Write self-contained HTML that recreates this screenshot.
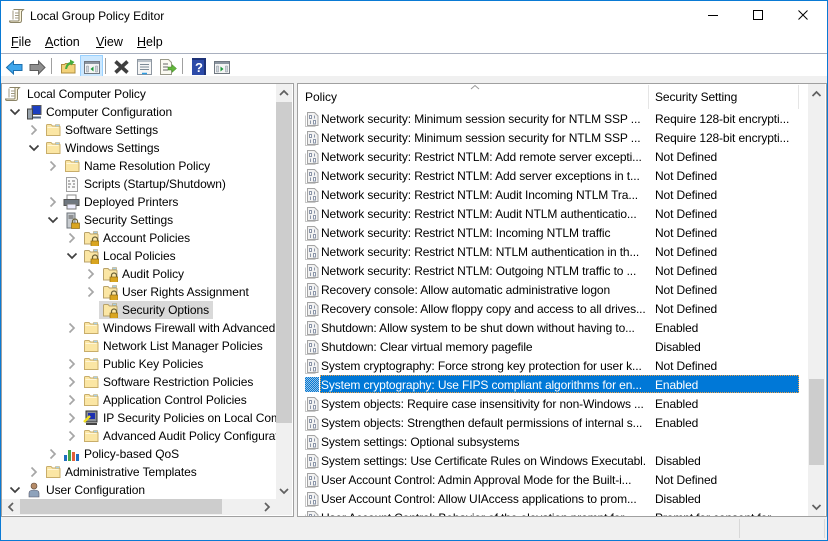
<!DOCTYPE html>
<html><head><meta charset="utf-8"><title>Local Group Policy Editor</title>
<style>
html,body{margin:0;padding:0;width:828px;height:541px;overflow:hidden;background:#fff}
body{position:relative;font:12px/18px "Liberation Sans",sans-serif;color:#000}
div,span,svg{position:absolute;white-space:nowrap}
svg{overflow:visible}
u{text-decoration:underline}
.m{top:34px;font-size:12.5px;line-height:16px}
.tree{left:2px;top:84px;width:274px;height:415px;overflow:hidden;background:#fff}
.tree div{height:18px;font-size:12px;letter-spacing:-.06px;line-height:18px}
.tree svg{width:16px;height:16px}
.list{left:298px;top:109px;width:510px;height:407px;overflow:hidden;background:#fff}
.r{left:23px;width:325px;height:19px;line-height:21px;font-size:12px;letter-spacing:-.12px;overflow:hidden}
.s{left:357px;width:140px;height:19px;line-height:21px;font-size:12px;letter-spacing:-.12px;overflow:hidden}
.i{left:7px;width:14px;height:15px;margin-top:1px}
.sep{top:58px;width:1px;height:16px;background:#a0a0a0}
</style></head><body>
<svg width="0" height="0" style="left:0;top:0">
<defs>
<pattern id="dith" width="2" height="2" patternUnits="userSpaceOnUse"><rect width="2" height="2" fill="#0078d7"/><rect width="1" height="1" fill="#9cc4e4"/><rect x="1" y="1" width="1" height="1" fill="#9cc4e4"/></pattern>
<symbol id="folder" viewBox="0 0 16 16"><path d="M1.5 13.5V3.5q0-1 1-1h3.5l1.500 1.500h6.500q1 0 1 1v8.500z" fill="#fbe6a4" stroke="#c8ad6a"/><path d="M10.500 2.500h4v2h-4z" fill="#a8cfe8" stroke="#c8ad6a" stroke-width=".6"/><path d="M2.500 5.500h11" stroke="#fff6d8"/></symbol>
<symbol id="lock" viewBox="0 0 16 16"><path d="M1.500 14V3.500q0-1 1-1h3.500l1.500 1.500h6.500q1 0 1 1V14z" fill="#fbe6a4" stroke="#b8a26a"/><path d="M10.500 1.500h4v2h-4z" fill="#a8cfe8" stroke="#b8a26a" stroke-width=".6"/><path d="M9.500 11V9.500a2.500 2.500 0 0 1 5 0V11" fill="none" stroke="#6b6238" stroke-width="1.200"/><rect x="8" y="11" width="8" height="6" fill="#d9a520" stroke="#8a6a14" stroke-width=".7"/></symbol>
<symbol id="scroll" viewBox="0 0 16 16"><path d="M4.500 1.500h10l-2 2v9q0 2-2 2H2q-1.500 0-1.500-1.500h8.500q1 0 1-1V2" fill="#fcf5dc" stroke="#8b8467"/><path d="M4 2.500v9M6 5h4M6 7.500h4M6 10h4" stroke="#a09a80" fill="none"/></symbol>
<symbol id="pol" viewBox="0 0 14 15"><path d="M.5 3.500v11h10" fill="none" stroke="#c8c8c8"/><path d="M2.500 .5h7l3.500 3.500v9.500H2.500z" fill="#f2f2f2" stroke="#a4a4a4"/><path d="M4.500 3.500h2v3h-2zM9.500 3.500v3M5.500 8.500v3.500M8.500 8.500h2v3.500h-2z" fill="#fff" stroke="#8b95a8"/></symbol>
<symbol id="cd" viewBox="0 0 16 16"><path d="M3.500 5.500L8 10l4.500-4.500" fill="none" stroke="#404040" stroke-width="1.700"/></symbol>
<symbol id="cr" viewBox="0 0 16 16"><path d="M5.500 3.500L10 8l-4.500 4.500" fill="none" stroke="#a6a6a6" stroke-width="1.700"/></symbol>
</defs></svg>

<!-- window frame -->
<div style="left:0;top:0;width:826px;height:539px;border:1px solid #0a7ad4"></div>
<svg style="left:9px;top:8px" width="16" height="16"><use href="#scroll"/></svg>
<div style="left:30px;top:8px;font-size:12px;letter-spacing:-.05px;line-height:16px">Local Group Policy Editor</div>
<svg style="left:705px;top:8px" width="110" height="14" fill="none" stroke="#000"><path d="M3 7.500h10"/><rect x="48.500" y="2.500" width="9" height="9"/><path d="M93.500 2.500l9 9M102.500 2.500l-9 9"/></svg>

<div class="m" style="left:11px"><u>F</u>ile</div>
<div class="m" style="left:45px"><u>A</u>ction</div>
<div class="m" style="left:96px"><u>V</u>iew</div>
<div class="m" style="left:137px"><u>H</u>elp</div>
<div style="left:1px;top:53px;width:826px;height:1px;background:#a9b0bf"></div>

<!-- toolbar -->
<svg style="left:6px;top:60px" width="17" height="15"><path d="M.5 7.500L7.500 1v3.500h8.500v6H7.500V14z" fill="#3ea6ec" stroke="#1c6fae"/></svg>
<svg style="left:29px;top:60px" width="17" height="15"><path d="M16 7.500L9.500 1v3.500H1v6h8.500V14z" fill="#8f8f8f" stroke="#5c5c5c"/></svg>
<div class="sep" style="left:51px"></div>
<svg style="left:61px;top:58px" width="15" height="16"><path d="M.5 15V6.500h3l1-1h3v1h6.500V15z" fill="#f3d27a" stroke="#b08f3e"/><path d="M4 11q1-6 5-7V1.500L13.500 4 10 7.500V6q-3 1-4 5z" fill="#46ad3e"/></svg>
<div style="left:80px;top:55px;width:21px;height:20px;border:1px solid #99d1ff;background:#cce8ff"></div>
<svg style="left:84px;top:61px" width="16" height="13"><rect x=".5" y=".5" width="15" height="12" fill="#f4f4f4" stroke="#6f7780"/><rect x="1" y="1" width="14" height="2" fill="#8b95a0"/><path d="M2.500 5h2v6h-2zM11.500 5h2v6h-2z" fill="#cfd6dd" stroke="#88919a" stroke-width=".5"/><path d="M9.500 5.500v5L6.500 8z" fill="#1d9a3c"/></svg>
<div class="sep" style="left:105px"></div>
<svg style="left:113px;top:59px" width="17" height="16"><path d="M2.500 2.500l12 11M14.500 2.500l-12 11" stroke="#3f3f3f" stroke-width="3.600"/></svg>
<svg style="left:137px;top:59px" width="15" height="16"><rect x=".5" y=".5" width="14" height="15" fill="#f5f5f5" stroke="#8d96a0"/><rect x="1" y="1" width="13" height="2" fill="#b8c0c8"/><path d="M3 5.500h9M3 8h9M3 10.500h9" stroke="#7d8a96"/><path d="M5 14.500h5" stroke="#2d9be0" stroke-width="1.500"/></svg>
<svg style="left:160px;top:59px" width="17" height="16"><path d="M.5.500h8l3 3v12h-11z" fill="#fbfaf2" stroke="#9a9a8a"/><path d="M3 5h5M3 8h5M3 11h5" stroke="#666"/><path d="M8 8h4V5.500l4.500 4-4.500 4V11H8z" fill="#62b53c" stroke="#3f8a22" stroke-width=".5"/></svg>
<div class="sep" style="left:182px"></div>
<svg style="left:192px;top:58px" width="14" height="17"><rect width="14" height="17" fill="#2c4aa8"/><path d="M0 0h14v2H0zM12 0h2v17h-2z" fill="#1d3278"/><text x="3" y="14" font-family="Liberation Sans,sans-serif" font-weight="bold" font-size="13" fill="#fff">?</text></svg>
<svg style="left:214px;top:61px" width="16" height="13"><rect x=".5" y=".5" width="15" height="12" fill="#f4f4f4" stroke="#6f7780"/><rect x="1" y="1" width="14" height="2" fill="#8b95a0"/><path d="M2.500 5h2v6h-2zM11.500 5h2v6h-2z" fill="#cfd6dd" stroke="#88919a" stroke-width=".5"/><path d="M6.500 5.500v5L9.500 8z" fill="#1d9a3c"/></svg>

<!-- middle band -->
<div style="left:1px;top:76px;width:826px;height:7px;background:#f0f0f0"></div>
<div style="left:1px;top:517px;width:826px;height:23px;background:#f0f0f0"></div>
<div style="left:739px;top:519px;width:1px;height:19px;background:#d8d8d8"></div>
<div style="left:824px;top:519px;width:1px;height:19px;background:#d8d8d8"></div>
<div style="left:294px;top:83px;width:3px;height:434px;background:#f0f0f0"></div>

<!-- left pane -->
<div style="left:1px;top:83px;width:291px;height:432px;border:1px solid #a0a0a0;background:#fff"></div>
<div class="tree">
<div style="left:97px;top:217px;width:114px;height:18px;background:#d9d9d9"></div>
<svg style="left:3px;top:2px"><use href="#scroll"/></svg><div style="left:25px;top:1px">Local Computer Policy</div>
<svg style="left:5px;top:20px"><use href="#cd"/></svg><svg style="left:24px;top:20px"><path d="M6 1.500h9v9H6z" fill="#1c3fc0" stroke="#555"/><path d="M1.500 5h5v10h-5z" fill="#9aa4ad" stroke="#444"/><path d="M7 13.500h8" stroke="#5a6a80" stroke-width="2"/></svg><div style="left:44px;top:19px">Computer Configuration</div>
<svg style="left:24px;top:38px"><use href="#cr"/></svg><svg style="left:43px;top:38px"><use href="#folder"/></svg><div style="left:63px;top:37px">Software Settings</div>
<svg style="left:24px;top:56px"><use href="#cd"/></svg><svg style="left:43px;top:56px"><use href="#folder"/></svg><div style="left:63px;top:55px">Windows Settings</div>
<svg style="left:43px;top:74px"><use href="#cr"/></svg><svg style="left:62px;top:74px"><use href="#folder"/></svg><div style="left:82px;top:73px">Name Resolution Policy</div>
<svg style="left:62px;top:92px"><path d="M2.500 1.500h9l2 2v12h-11z" fill="#fafafa" stroke="#a0a0a0"/><path d="M4 5h2M8 5h3M4 8h3M9 8h2M4 11h2M8 11h3" stroke="#707070"/></svg><div style="left:82px;top:91px">Scripts (Startup/Shutdown)</div>
<svg style="left:43px;top:110px"><use href="#cr"/></svg><svg style="left:61px;top:110px"><rect x="4" y="1" width="9" height="5" fill="#fff" stroke="#888"/><rect x="1" y="5.500" width="15" height="6" fill="#6f7780" stroke="#555"/><rect x="4" y="10" width="9" height="5" fill="#eef" stroke="#777"/></svg><div style="left:82px;top:109px">Deployed Printers</div>
<svg style="left:43px;top:128px"><use href="#cd"/></svg><svg style="left:62px;top:128px"><path d="M3 1h8v15H3z" fill="#c8ccd0" stroke="#6d737a"/><path d="M4.500 4h5M4.500 6h5" stroke="#555"/><path d="M8.500 11V9.500a2.500 2.500 0 0 1 5 0V11" fill="none" stroke="#6b6238" stroke-width="1.200"/><rect x="7.500" y="11" width="8" height="5.500" fill="#d9a520" stroke="#8a6a14" stroke-width=".7"/></svg><div style="left:82px;top:127px">Security Settings</div>
<svg style="left:62px;top:146px"><use href="#cr"/></svg><svg style="left:81px;top:146px"><use href="#lock"/></svg><div style="left:101px;top:145px">Account Policies</div>
<svg style="left:62px;top:164px"><use href="#cd"/></svg><svg style="left:81px;top:164px"><use href="#lock"/></svg><div style="left:101px;top:163px">Local Policies</div>
<svg style="left:81px;top:182px"><use href="#cr"/></svg><svg style="left:100px;top:182px"><use href="#lock"/></svg><div style="left:120px;top:181px">Audit Policy</div>
<svg style="left:81px;top:200px"><use href="#cr"/></svg><svg style="left:100px;top:200px"><use href="#lock"/></svg><div style="left:120px;top:199px">User Rights Assignment</div>
<svg style="left:100px;top:218px"><use href="#lock"/></svg><div style="left:120px;top:217px">Security Options</div>
<svg style="left:62px;top:236px"><use href="#cr"/></svg><svg style="left:81px;top:236px"><use href="#folder"/></svg><div style="left:101px;top:235px">Windows Firewall with Advanced Security</div>
<svg style="left:81px;top:254px"><use href="#folder"/></svg><div style="left:101px;top:253px">Network List Manager Policies</div>
<svg style="left:62px;top:272px"><use href="#cr"/></svg><svg style="left:81px;top:272px"><use href="#folder"/></svg><div style="left:101px;top:271px">Public Key Policies</div>
<svg style="left:62px;top:290px"><use href="#cr"/></svg><svg style="left:81px;top:290px"><use href="#folder"/></svg><div style="left:101px;top:289px">Software Restriction Policies</div>
<svg style="left:62px;top:308px"><use href="#cr"/></svg><svg style="left:81px;top:308px"><use href="#folder"/></svg><div style="left:101px;top:307px">Application Control Policies</div>
<svg style="left:62px;top:326px"><use href="#cr"/></svg><svg style="left:81px;top:326px"><path d="M3 1h11v11H3z" fill="#8a8f94" stroke="#333"/><rect x="5" y="3" width="7" height="6" fill="#1c2fb0"/><path d="M3 14h11" stroke="#444" stroke-width="2"/><path d="M1 12l6-6" stroke="#f2e020" stroke-width="2.400"/></svg><div style="left:101px;top:325px">IP Security Policies on Local Computer</div>
<svg style="left:62px;top:344px"><use href="#cr"/></svg><svg style="left:81px;top:344px"><use href="#folder"/></svg><div style="left:101px;top:343px">Advanced Audit Policy Configuration</div>
<svg style="left:43px;top:362px"><use href="#cr"/></svg><svg style="left:61px;top:362px"><path d="M1 9h3v6H1z" fill="#1f6fc0"/><path d="M5 4h3v11H5z" fill="#43a648"/><path d="M9 6h3v9H9z" fill="#e2603a"/><path d="M13 8h3v7h-3z" fill="#1f6fc0"/></svg><div style="left:82px;top:361px">Policy-based QoS</div>
<svg style="left:24px;top:380px"><use href="#cr"/></svg><svg style="left:43px;top:380px"><use href="#folder"/></svg><div style="left:63px;top:379px">Administrative Templates</div>
<svg style="left:5px;top:398px"><use href="#cd"/></svg><svg style="left:24px;top:398px"><circle cx="8" cy="4" r="3" fill="#b58b68" stroke="#5b4636" stroke-width=".6"/><path d="M3 15v-4q0-3 5-3t5 3v4z" fill="#8ea2bb" stroke="#556" stroke-width=".6"/></svg><div style="left:44px;top:397px">User Configuration</div>
</div>
<!-- left scrollbars -->
<div style="left:276px;top:84px;width:16px;height:415px;background:#f0f0f0"></div>
<div style="left:276px;top:102px;width:16px;height:321px;background:#cdcdcd"></div>
<svg style="left:276px;top:85px" width="16" height="16"><path d="M4 10l4-4 4 4" fill="none" stroke="#606060" stroke-width="1.700"/></svg>
<svg style="left:276px;top:483px" width="16" height="16"><path d="M4 6l4 4 4-4" fill="none" stroke="#606060" stroke-width="1.700"/></svg>
<div style="left:2px;top:499px;width:290px;height:16px;background:#f0f0f0"></div>
<div style="left:20px;top:499px;width:202px;height:15px;background:#cdcdcd"></div>
<svg style="left:3px;top:499px" width="16" height="16"><path d="M10 4L6 8l4 4" fill="none" stroke="#606060" stroke-width="1.700"/></svg>
<svg style="left:259px;top:499px" width="16" height="16"><path d="M6 4l4 4-4 4" fill="none" stroke="#606060" stroke-width="1.700"/></svg>

<!-- right pane -->
<div style="left:297px;top:83px;width:528px;height:432px;border:1px solid #a0a0a0;background:#fff"></div>
<div style="left:305px;top:88px;font-size:12px">Policy</div>
<div style="left:655px;top:88px;font-size:12px;letter-spacing:-.12px">Security Setting</div>
<div style="left:648px;top:85px;width:1px;height:24px;background:#e5e5e5"></div>
<div style="left:798px;top:85px;width:1px;height:24px;background:#e5e5e5"></div>
<svg style="left:470px;top:84px" width="10" height="6"><path d="M1 5l4-3.500L9 5" fill="none" stroke="#9a9a9a"/></svg>

<div class="list">
<div style="left:22px;top:266px;width:479px;height:18px;background:#0078d7;outline:1px dotted #e9a04a;outline-offset:-1px"></div>
<svg class="i" style="top:2px"><use href="#pol"/></svg><div class="r" style="top:0">Network security: Minimum session security for NTLM SSP ...</div><div class="s" style="top:0">Require 128-bit encrypti...</div>
<svg class="i" style="top:21px"><use href="#pol"/></svg><div class="r" style="top:19px">Network security: Minimum session security for NTLM SSP ...</div><div class="s" style="top:19px">Require 128-bit encrypti...</div>
<svg class="i" style="top:40px"><use href="#pol"/></svg><div class="r" style="top:38px">Network security: Restrict NTLM: Add remote server excepti...</div><div class="s" style="top:38px">Not Defined</div>
<svg class="i" style="top:59px"><use href="#pol"/></svg><div class="r" style="top:57px">Network security: Restrict NTLM: Add server exceptions in t...</div><div class="s" style="top:57px">Not Defined</div>
<svg class="i" style="top:78px"><use href="#pol"/></svg><div class="r" style="top:76px">Network security: Restrict NTLM: Audit Incoming NTLM Tra...</div><div class="s" style="top:76px">Not Defined</div>
<svg class="i" style="top:97px"><use href="#pol"/></svg><div class="r" style="top:95px">Network security: Restrict NTLM: Audit NTLM authenticatio...</div><div class="s" style="top:95px">Not Defined</div>
<svg class="i" style="top:116px"><use href="#pol"/></svg><div class="r" style="top:114px">Network security: Restrict NTLM: Incoming NTLM traffic</div><div class="s" style="top:114px">Not Defined</div>
<svg class="i" style="top:135px"><use href="#pol"/></svg><div class="r" style="top:133px">Network security: Restrict NTLM: NTLM authentication in th...</div><div class="s" style="top:133px">Not Defined</div>
<svg class="i" style="top:154px"><use href="#pol"/></svg><div class="r" style="top:152px">Network security: Restrict NTLM: Outgoing NTLM traffic to ...</div><div class="s" style="top:152px">Not Defined</div>
<svg class="i" style="top:173px"><use href="#pol"/></svg><div class="r" style="top:171px">Recovery console: Allow automatic administrative logon</div><div class="s" style="top:171px">Not Defined</div>
<svg class="i" style="top:192px"><use href="#pol"/></svg><div class="r" style="top:190px">Recovery console: Allow floppy copy and access to all drives...</div><div class="s" style="top:190px">Not Defined</div>
<svg class="i" style="top:211px"><use href="#pol"/></svg><div class="r" style="top:209px">Shutdown: Allow system to be shut down without having to...</div><div class="s" style="top:209px">Enabled</div>
<svg class="i" style="top:230px"><use href="#pol"/></svg><div class="r" style="top:228px">Shutdown: Clear virtual memory pagefile</div><div class="s" style="top:228px">Disabled</div>
<svg class="i" style="top:249px"><use href="#pol"/></svg><div class="r" style="top:247px">System cryptography: Force strong key protection for user k...</div><div class="s" style="top:247px">Not Defined</div>
<svg class="i" style="top:267px"><path d="M0 0h14v15H0z" fill="url(#dith)"/></svg><div class="r" style="top:266px;color:#fff">System cryptography: Use FIPS compliant algorithms for en...</div><div class="s" style="top:266px;color:#fff">Enabled</div>
<svg class="i" style="top:287px"><use href="#pol"/></svg><div class="r" style="top:285px">System objects: Require case insensitivity for non-Windows ...</div><div class="s" style="top:285px">Enabled</div>
<svg class="i" style="top:306px"><use href="#pol"/></svg><div class="r" style="top:304px">System objects: Strengthen default permissions of internal s...</div><div class="s" style="top:304px">Enabled</div>
<svg class="i" style="top:325px"><use href="#pol"/></svg><div class="r" style="top:323px">System settings: Optional subsystems</div>
<svg class="i" style="top:344px"><use href="#pol"/></svg><div class="r" style="top:342px">System settings: Use Certificate Rules on Windows Executabl...</div><div class="s" style="top:342px">Disabled</div>
<svg class="i" style="top:363px"><use href="#pol"/></svg><div class="r" style="top:361px">User Account Control: Admin Approval Mode for the Built-i...</div><div class="s" style="top:361px">Not Defined</div>
<svg class="i" style="top:382px"><use href="#pol"/></svg><div class="r" style="top:380px">User Account Control: Allow UIAccess applications to prom...</div><div class="s" style="top:380px">Disabled</div>
<svg class="i" style="top:401px"><use href="#pol"/></svg><div class="r" style="top:399px">User Account Control: Behavior of the elevation prompt for ...</div><div class="s" style="top:399px">Prompt for consent for ...</div>
</div>
<!-- right scrollbar -->
<div style="left:808px;top:84px;width:17px;height:432px;background:#f0f0f0"></div>
<div style="left:809px;top:379px;width:15px;height:86px;background:#cdcdcd"></div>
<svg style="left:808px;top:87px" width="17" height="16"><path d="M4.500 9l4-4 4 4" fill="none" stroke="#606060" stroke-width="1.700"/></svg>
<svg style="left:808px;top:499px" width="17" height="16"><path d="M4.500 6l4 4 4-4" fill="none" stroke="#606060" stroke-width="1.700"/></svg>
</body></html>
